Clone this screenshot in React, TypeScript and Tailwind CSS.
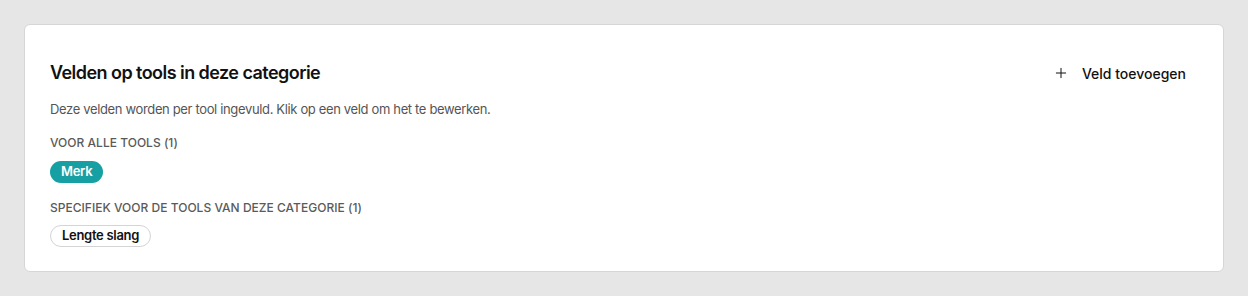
import { Plus } from 'lucide-react'

const allTools = ['Merk']
const categoryTools = ['Lengte slang']

export default function App() {
  return (
    <div className="min-h-[296px] bg-[#e6e6e6] p-6 font-['Inter',sans-serif]">
      <div className="rounded-md border border-[#d6d6d6] bg-white px-[25px] pt-[30px] pb-6">
        <div className="flex items-center justify-between">
          <h2 className="text-[18px] leading-7 font-semibold tracking-[-0.55px] text-[#111]">
            Velden op tools in deze categorie
          </h2>
          <button className="flex h-9 items-center gap-[13px] px-[12px] text-[14px] font-medium text-[#111]">
            <Plus className="h-4 w-4" strokeWidth={1.5} />
            Veld toevoegen
          </button>
        </div>
        <p className="mt-2 text-[13px] leading-5 tracking-[-0.35px] text-[#555]">
          Deze velden worden per tool ingevuld. Klik op een veld om het te bewerken.
        </p>

        <h3 className="mt-4 text-[12px] leading-4 font-medium tracking-[0.02px] text-[#5a5a5a]">
          VOOR ALLE TOOLS ({allTools.length})
        </h3>
        <div className="mt-[10px] flex gap-2">
          {allTools.map((t) => (
            <span
              key={t}
              className="flex h-[22px] items-center rounded-full bg-[#17a0a4] px-[11px] text-[13px] font-semibold tracking-[-0.3px] text-white"
            >
              {t}
            </span>
          ))}
        </div>

        <h3 className="mt-[17px] text-[12px] leading-4 font-medium tracking-[0.02px] text-[#5a5a5a]">
          SPECIFIEK VOOR DE TOOLS VAN DEZE CATEGORIE ({categoryTools.length})
        </h3>
        <div className="mt-[9px] flex gap-2">
          {categoryTools.map((t) => (
            <span
              key={t}
              className="flex h-[22px] items-center rounded-full border border-[#d4d4d4] px-[11px] text-[13px] font-semibold tracking-[-0.3px] text-[#111]"
            >
              {t}
            </span>
          ))}
        </div>
      </div>
    </div>
  )
}
